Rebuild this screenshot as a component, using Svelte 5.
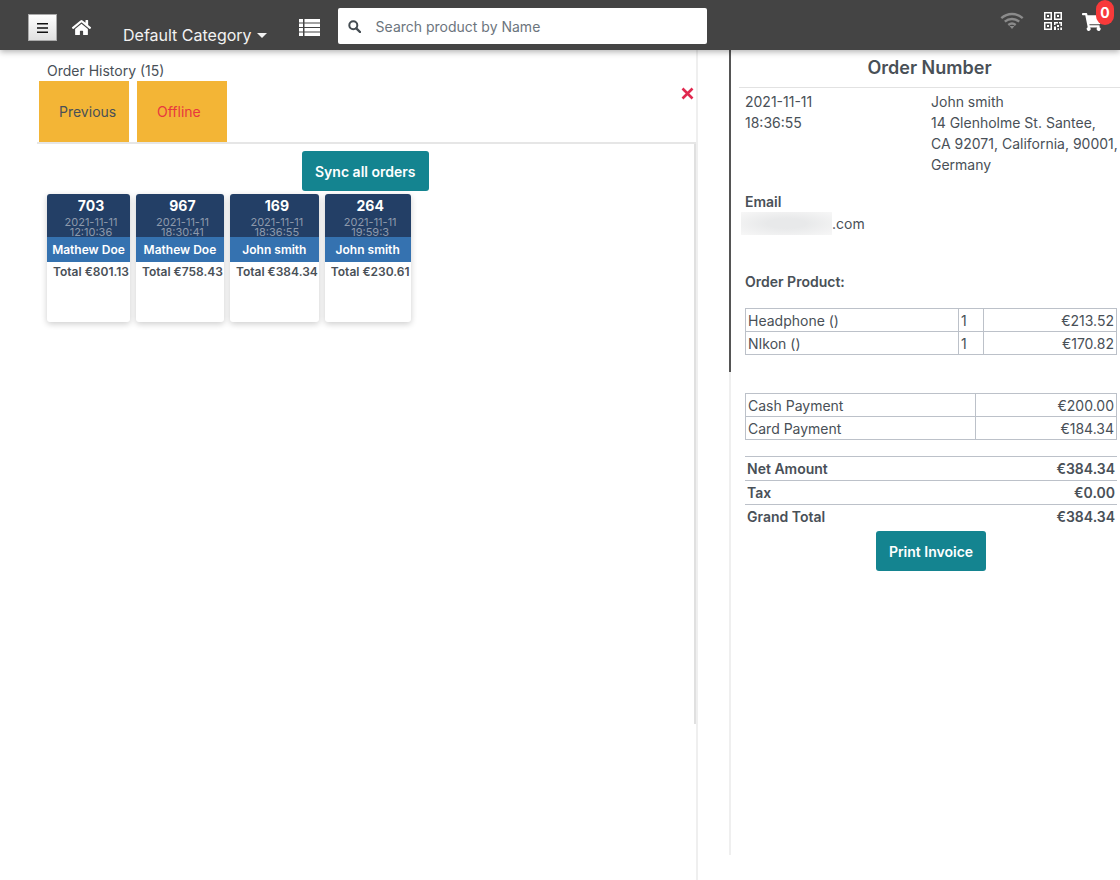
<script>
    const orders = [
        { id: 703, date: "2021-11-11", time: "12:10:36", name: "Mathew Doe", total: "€801.13" },
        { id: 967, date: "2021-11-11", time: "18:30:41", name: "Mathew Doe", total: "€758.43" },
        { id: 169, date: "2021-11-11", time: "18:36:55", name: "John smith", total: "€384.34" },
        { id: 264, date: "2021-11-11", time: "19:59:3", name: "John smith", total: "€230.61" }
    ];
    const products = [
        { name: "Headphone ()", qty: 1, price: "€213.52" },
        { name: "NIkon ()", qty: 1, price: "€170.82" }
    ];
    const payments = [
        { name: "Cash Payment", amount: "€200.00" },
        { name: "Card Payment", amount: "€184.34" }
    ];
    const totals = [
        { name: "Net Amount", amount: "€384.34" },
        { name: "Tax", amount: "€0.00" },
        { name: "Grand Total", amount: "€384.34" }
    ];
</script>

<div class="page">
    <header class="topbar">
        <button type="button" class="menu-btn" aria-label="Menu">
            <svg width="11" height="10" viewBox="0 0 11 10"><path d="M0 0h11v1.6H0zM0 4.2h11v1.6H0zM0 8.4h11V10H0z" fill="#111" /></svg>
        </button>
        <svg class="home" width="21" height="17" viewBox="0 0 576 512">
            <path fill="#fff" d="M280.4 148.3 96 300.1V464a16 16 0 0 0 16 16l112-.3a16 16 0 0 0 16-16V368a16 16 0 0 1 16-16h64a16 16 0 0 1 16 16v95.6a16 16 0 0 0 16 16.1l112 .3a16 16 0 0 0 16-16V300L295.700 148.300a12.200 12.200 0 0 0-15.300 0zM571.600 251.500 488 182.600V44.100a12 12 0 0 0-12-12h-56a12 12 0 0 0-12 12v72.600L318.500 43a48 48 0 0 0-61 0L4.300 251.500a12 12 0 0 0-1.600 16.900l25.500 31A12 12 0 0 0 45.200 301l235.200-193.700a12.200 12.200 0 0 1 15.300 0L530.900 301a12 12 0 0 0 16.900-1.600l25.500-31a12 12 0 0 0-1.700-16.900z" />
        </svg>
        <span class="category">Default Category<i class="caret"></i></span>
        <svg class="list" width="21" height="17" viewBox="0 0 21 17">
            <path fill="#fff" d="M0 0h4v3.500H0zM5.500 0H21v3.500H5.500zM0 4.500h4V8H0zM5.500 4.500H21V8H5.500zM0 9h4v3.500H0zM5.500 9H21v3.500H5.500zM0 13.500h4V17H0zM5.500 13.500H21V17H5.500z" />
        </svg>
        <div class="search">
            <svg width="13" height="13" viewBox="0 0 13 13"><circle cx="5.300" cy="5.300" r="4" fill="none" stroke="#444c52" stroke-width="2" /><path d="m8.300 8.300 3.700 3.700" stroke="#444c52" stroke-width="2.400" stroke-linecap="round" /></svg>
            <span>Search product by Name</span>
        </div>
        <div class="top-icons">
            <svg width="24" height="17" viewBox="0 0 24 17" fill="none" stroke="#8b8b8b" stroke-width="2.400">
                <path d="M1.300 6.200C7.500.6 16.500.6 22.700 6.200M4.800 9.700c4.200-3.700 10.200-3.700 14.400 0M8.300 13c2.200-1.700 5.200-1.700 7.400 0" />
                <path d="m12 17-2.400-3h4.800z" fill="#8b8b8b" stroke="none" />
            </svg>
            <svg width="18" height="18" viewBox="0 0 18 18" fill="#fff">
                <path fill-rule="evenodd" d="M0 0h8v8H0zM1.500 1.500v5h5v-5zM10 0h8v8h-8zM11.500 1.500v5h5v-5zM0 10h8v8H0zM1.500 11.500v5h5v-5z" />
                <path d="M3 3h2v2H3zM13 3h2v2h-2zM3 13h2v2H3zM10 10h4v1.500h-2.500V13H10zM15 10h3v4h-1.500v-2.500H15zM10 14.500h2V18h-2zM13 13h2v2h-2zM13.500 16.300h1.500V18h-1.500zM16.300 15.500H18V18h-1.700z" />
            </svg>
            <div class="cart">
                <svg width="20" height="18" viewBox="0 0 576 512"><path fill="#fff" d="M528 301.300l47.300-208A24 24 0 0 0 552 64H159.200l-9.200-44.800A24 24 0 0 0 126.500 0H24A24 24 0 0 0 0 24v16a24 24 0 0 0 24 24h69.900l70.200 343.400a56 56 0 1 0 67 8.600h209.800a56 56 0 1 0 63.600-10.400l5.500-24.400A24 24 0 0 0 487 352H218.700l-6.500-32h292.400a24 24 0 0 0 23.400-18.700z" /></svg>
                <span class="badge">0</span>
            </div>
        </div>
    </header>

    <main class="content">
        <section class="history">
            <div class="history-title">Order History (15)</div>
            <div class="tabs">
                <button type="button" class="tab">Previous</button>
                <button type="button" class="tab offline">Offline</button>
                <svg class="close" width="13" height="13" viewBox="0 0 13 13"><path d="m1.500 1.500 10 10m0-10-10 10" stroke="#e0294f" stroke-width="2.600" /></svg>
            </div>
            <div class="history-body">
                <button type="button" class="teal-btn">Sync all orders</button>
                <div class="cards">
                    {#each orders as order}
                        <article class="card">
                            <div class="card-head">
                                <strong>{order.id}</strong>
                                <span>{order.date}</span>
                                <span>{order.time}</span>
                            </div>
                            <div class="card-name">{order.name}</div>
                            <div class="card-total">Total {order.total}</div>
                        </article>
                    {/each}
                </div>
            </div>
        </section>

        <div class="gutter"><div class="gutter-corner"></div></div>

        <section class="detail">
            <h2>Order Number</h2>
            <div class="meta">
                <div class="meta-date">2021-11-11<br />18:36:55</div>
                <div>John smith<br />14 Glenholme St. Santee,<br />CA 92071, California, 90001,<br />Germany</div>
            </div>
            <div class="email">
                <strong>Email</strong>
                <div class="email-value"><i class="blur"></i>.com</div>
            </div>
            <strong class="product-label">Order Product:</strong>
            <table class="grid products">
                <tbody>
                    {#each products as p}
                        <tr><td class="c1">{p.name}</td><td class="c2">{p.qty}</td><td class="num">{p.price}</td></tr>
                    {/each}
                </tbody>
            </table>
            <table class="grid payments">
                <tbody>
                    {#each payments as p}
                        <tr><td class="p1">{p.name}</td><td class="num">{p.amount}</td></tr>
                    {/each}
                </tbody>
            </table>
            <div class="totals">
                {#each totals as t}
                    <div class="total-row"><span>{t.name}</span><span>{t.amount}</span></div>
                {/each}
            </div>
            <div class="print-row"><button type="button" class="teal-btn">Print Invoice</button></div>
        </section>
        <div class="thumb"></div>
    </main>
</div>

<style>
    :global(body) {
        margin: 0;
        background: #fff;
        overflow: hidden;
    }
    .page {
        width: 1120px;
        height: 880px;
        font-family: Inter, "Liberation Sans", sans-serif;
        font-size: 14px;
        color: #495057;
        overflow: hidden;
    }
    .topbar {
        position: relative;
        z-index: 2;
        display: flex;
        align-items: flex-start;
        height: 50px;
        box-sizing: border-box;
        background: #444;
        box-shadow: 0 2px 6px rgba(0, 0, 0, 0.3);
    }
    .menu-btn {
        display: flex;
        align-items: center;
        justify-content: center;
        width: 29px;
        height: 27px;
        margin: 14px 0 0 28px;
        padding: 0;
        border: 1px solid #aaa;
        background: linear-gradient(180deg, #fff, #e0e0e0);
    }
    .home { margin: 19px 0 0 14px; }
    .category {
        margin: 25px 0 0 31px;
        font-size: 16px;
        line-height: 20px;
        color: #f2f2f2;
    }
    .caret {
        display: inline-block;
        margin-left: 5px;
        vertical-align: 3px;
        border: 5px solid transparent;
        border-top-color: #f2f2f2;
        border-bottom: 0;
    }
    .list { margin: 19px 0 0 32px; }
    .search {
        display: flex;
        align-items: center;
        gap: 15px;
        width: 369px;
        height: 36px;
        margin: 8px 0 0 18px;
        padding-left: 10px;
        box-sizing: border-box;
        border-radius: 2px;
        background: #fff;
        color: #6c757d;
    }
    .top-icons {
        display: flex;
        align-items: flex-start;
        gap: 20px;
        margin-left: auto;
        padding: 12px 9px 0 0;
    }
    .cart { position: relative; width: 29px; padding-top: 1px; }
    .badge {
        position: absolute;
        top: -12px;
        left: 14px;
        width: 18px;
        height: 25px;
        border-radius: 9px;
        background: #f83a3a;
        color: #fff;
        font-size: 14px;
        font-weight: 700;
        line-height: 26px;
        text-align: center;
    }
    .content {
        position: relative;
        display: flex;
        height: 830px;
    }
    .history {
        width: 696px;
        height: 830px;
        flex: none;
        box-sizing: border-box;
        border-right: 2px solid #efefef;
        width: 698px;
    }
    .history-title {
        padding: 10px 0 0 47px;
        line-height: 21px;
    }
    .tabs {
        position: relative;
        display: flex;
        gap: 8px;
        height: 63px;
        margin-left: 37px;
        padding-left: 2px;
        border-bottom: 2px solid #e6e6e6;
        box-sizing: border-box;
    }
    .tab {
        width: 90px;
        height: 61px;
        padding: 0 0 0 20px;
        border: 0;
        background: #f3b536;
        color: #495057;
        font: inherit;
        text-align: left;
    }
    .tab.offline { color: #e8383f; }
    .close { position: absolute; top: 6px; right: 2px; }
    .history-body {
        display: flex;
        flex-direction: column;
        height: 580px;
        border-right: 2px solid #e0e0e0;
        box-sizing: border-box;
        padding-top: 7px;
    }
    .history-body > .teal-btn { align-self: flex-start; margin-left: 302px; }
    .teal-btn {
        height: 40px;
        padding: 0 13px;
        border: 0;
        border-radius: 3px;
        background: #148490;
        color: #fff;
        font: inherit;
        font-weight: 600;
    }
    .cards {
        display: flex;
        align-items: flex-start;
        gap: 6px;
        margin: 3px 0 0 47px;
    }
    .card {
        height: 128px;
        border-radius: 3px;
        background: #fff;
        box-shadow: 0 2px 6px rgba(0, 0, 0, 0.2);
        overflow: hidden;
    }
    .card-head {
        display: flex;
        flex-direction: column;
        align-items: center;
        height: 43px;
        padding-left: 5px;
        background: #233f66;
        color: #8d99ab;
        font-size: 11px;
        line-height: 10px;
    }
    .card-head strong {
        margin: 4px 0 3px;
        color: #fff;
        font-size: 14px;
        line-height: 16px;
    }
    .card-name {
        padding: 0 2px;
        background: #3572b0;
        color: #fff;
        font-size: 12px;
        font-weight: 600;
        line-height: 25px;
        text-align: center;
    }
    .card-total {
        padding: 2px 1px 0 6px;
        font-size: 12px;
        font-weight: 600;
        line-height: 16px;
        white-space: nowrap;
    }
    .gutter {
        position: relative;
        width: 31px;
        height: 805px;
        flex: none;
    }
    .gutter-corner {
        position: absolute;
        left: 0;
        bottom: 0;
        width: 31px;
        height: 0;
    }
    .detail {
        flex: 1;
        height: 805px;
        box-sizing: border-box;
        border-left: 2px solid #efefef;
        padding-left: 8px;
        min-width: 0;
    }
    .detail h2 {
        margin: 0;
        height: 37px;
        border-bottom: 1px solid #e2e2e2;
        font-size: 18px;
        font-weight: 600;
        line-height: 36px;
        text-align: center;
    }
    .meta {
        display: grid;
        grid-template-columns: 186px 1fr;
        padding: 3px 0 0 6px;
        line-height: 21px;
        white-space: nowrap;
    }
    .email { padding: 16px 0 0 6px; line-height: 21px; }
    .email strong { font-weight: 600; display: block; }
    .email-value { display: flex; align-items: center; }
    .blur {
        display: block;
        width: 91px;
        height: 23px;
        margin-left: -4px;
        background: radial-gradient(ellipse at 50% 50%, #e8e9ea 30%, #f7f7f7 100%);
    }
    .product-label { display: block; margin: 36px 0 0 6px; font-weight: 600; line-height: 21px; }
    .grid {
        width: 372px;
        margin-left: 6px;
        border-collapse: collapse;
        font-size: 14px;
    }
    .grid td {
        height: 23px;
        padding: 0 2px;
        border: 1px solid #bcc1c9;
        box-sizing: border-box;
    }
    .products { margin-top: 16px; }
    .payments { margin-top: 38px; }
    .c1 { width: 213px; }
    .c2 { width: 25px; }
    .p1 { width: 230px; }
    .num { text-align: right; }
    .totals { margin: 16px 0 0 6px; width: 372px; }
    .total-row {
        display: flex;
        justify-content: space-between;
        padding: 0 2px 0 2px;
        height: 24px;
        box-sizing: border-box;
        border-top: 1px solid #bcc1c9;
        font-weight: 600;
        line-height: 23px;
    }
    .print-row { display: flex; justify-content: center; padding: 3px 0 0 6px; width: 372px; }
    .thumb {
        position: absolute;
        left: 729px;
        top: 0;
        width: 2px;
        height: 322px;
        background: #555;
    }
</style>
